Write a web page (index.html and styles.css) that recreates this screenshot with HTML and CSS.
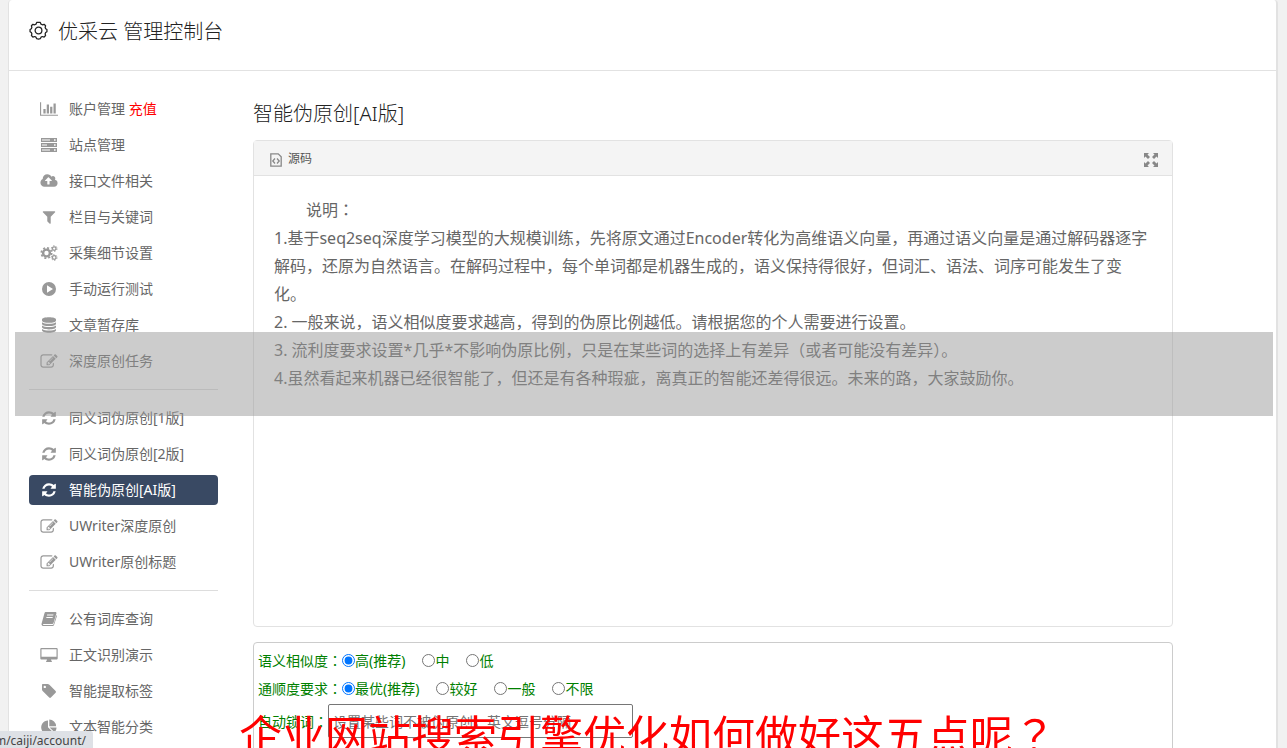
FILE: index.html
```html
<!DOCTYPE html>
<html lang="zh-CN">
<head>
    <meta charset="UTF-8">
    <meta name="viewport" content="width=device-width, initial-scale=1.0">
    <title>优采云 管理控制台</title>
    <link rel="stylesheet" href="styles.css">
</head>
<body>
    <!-- 图标 -->
    <svg class="sprite" aria-hidden="true">
        <symbol id="i-gear" viewBox="0 0 18 18"><path d="M9 1.200l1.700.2.7 1.600 1.200.6 1.700-.5 1.400 1.400-.4 1.700.5 1.100 1.200.8v2l-1.200.8-.5 1.200.4 1.700-1.400 1.400-1.700-.5-1.200.6-.7 1.500-1.700.3-1.700-.3-.7-1.500-1.200-.6-1.700.5-1.400-1.400.4-1.700-.5-1.200L1 10.100v-2l1.200-.8.5-1.100-.4-1.700 1.400-1.400 1.700.5 1.200-.6.7-1.600z" fill="none" stroke="currentColor" stroke-width="1.200" stroke-linejoin="round"/><circle cx="9" cy="9" r="3.200" fill="none" stroke="currentColor" stroke-width="1.200"/></symbol>
        <symbol id="i-chart" viewBox="0 0 2048 1792"><path d="M640 896v512H384V896h256zm384-512v1024H768V384h256zm1024 1152v128H0V128h128v1408h1920zm-640-896v768h-256V640h256zm384-384v1152h-256V256h256z"/></symbol>
        <symbol id="i-server" viewBox="0 0 18 16"><path fill-rule="evenodd" d="M1 1h16v4H1zM1 6h16v4H1zM1 11h16v4H1zM2 2.500v1h8v-1zM2 7.500v1h5v-1zM2 12.500v1h8v-1zM14 2.200v1.600h1.600V2.200zM14 7.200v1.600h1.600V7.200zM14 12.200v1.600h1.600v-1.600z"/></symbol>
        <symbol id="i-cloud" viewBox="0 0 1920 1792"><path fill-rule="evenodd" d="M1280 864q0-14-9-23L919 489q-9-9-23-9t-23 9L522 840q-10 12-10 24 0 14 9 23t23 9h224v352q0 13 9.500 22.500t22.500 9.500h192q13 0 22.500-9.500t9.500-22.500V896h224q13 0 22.500-9.500t9.500-22.500zm640 288q0 159-112.500 271.500T1536 1536H448q-185 0-316.500-131.500T0 1088q0-130 70-240t188-165q-2-30-2-43 0-212 150-362t362-150q156 0 285.500 87T1242 410q71-62 166-62 106 0 181 75t75 181q0 76-41 138 130 31 213.500 135.500T1920 1152z"/></symbol>
        <symbol id="i-filter" viewBox="0 0 1792 1792"><path d="M1595 295q17 41-14 70l-493 493v742q0 42-39 59-13 5-25 5-27 0-45-19l-256-256q-19-19-19-45V858L211 365q-31-29-14-70 17-39 59-39h1280q42 0 59 39z"/></symbol>
        <symbol id="i-cogs" viewBox="0 0 18 16"><g fill="none" stroke="currentColor"><circle cx="6.500" cy="8" r="3.400" stroke-width="2.400"/><circle cx="6.500" cy="8" r="5.200" stroke-width="1.700" stroke-dasharray="2.040 2.040"/><circle cx="14.200" cy="3.600" r="1.800" stroke-width="1.300"/><circle cx="14.200" cy="3.600" r="2.800" stroke-width="1" stroke-dasharray="1.470 1.460"/><circle cx="14.200" cy="12.500" r="1.800" stroke-width="1.300"/><circle cx="14.200" cy="12.500" r="2.800" stroke-width="1" stroke-dasharray="1.470 1.460"/></g></symbol>
        <symbol id="i-play" viewBox="0 0 16 16"><path fill-rule="evenodd" d="M8 1a7 7 0 1 1 0 14A7 7 0 0 1 8 1zM6 4.300v7.400L12 8z"/></symbol>
        <symbol id="i-database" viewBox="0 0 16 16"><path d="M1 2.600C1 1 4 .2 8 .2s7 .8 7 2.400v.8c0 1.500-3 2.400-7 2.400s-7-.9-7-2.400zM1 5.300c1.500 1 4 1.500 7 1.500s5.500-.5 7-1.500v1.400c0 1.500-3 2.400-7 2.400s-7-.9-7-2.400zM1 8.600c1.500 1 4 1.500 7 1.500s5.500-.5 7-1.500V10c0 1.500-3 2.400-7 2.400S1 11.500 1 10zM1 11.900c1.500 1 4 1.500 7 1.500s5.500-.5 7-1.500v1.400c0 1.500-3 2.500-7 2.500s-7-1-7-2.500z"/></symbol>
        <symbol id="i-edit" viewBox="0 0 1792 1664"><path fill-rule="evenodd" d="M888 1184l116-116-152-152-116 116v56h96v96h56zm440-720q-16-16-33 1L945 815q-17 17-1 33t33-1l350-350q17-17 1-33zm80 594v190q0 119-84.500 203.500T1120 1536H288q-119 0-203.500-84.500T0 1248V416q0-119 84.500-203.500T288 128h832q63 0 117 25 15 7 18 23 3 17-9 29l-49 49q-14 14-32 8-23-6-45-6H288q-66 0-113 47t-47 113v832q0 66 47 113t113 47h832q66 0 113-47t47-113v-126q0-13 9-22l64-64q15-15 35-7t20 29zm-96-738l288 288-672 672H640V992l672-672zm444 132l-92 92-288-288 92-92q28-28 68-28t68 28l152 152q28 28 28 68t-28 68z"/></symbol>
        <symbol id="i-refresh" viewBox="-128 -128 1792 1792"><path d="M1511 928q0 5-1 7-64 268-268 434.500T764 1536q-146 0-282.500-55T238 1324l-129 129q-19 19-45 19t-45-19-19-45V960q0-26 19-45t45-19h448q26 0 45 19t19 45-19 45l-137 137q71 66 161 102t187 36q134 0 250-65t186-179q11-17 53-117 8-23 30-23h192q13 0 22.500 9.500t9.500 22.500zm25-800v448q0 26-19 45t-45 19h-448q-26 0-45-19t-19-45 19-45l138-138Q969 256 768 256q-134 0-250 65T332 500q-11 17-53 117-8 23-30 23H50q-13 0-22.500-9.500T18 608v-7q65-268 270-434.500T768 0q146 0 284 55.500T1297 212l130-129q19-19 45-19t45 19 19 45z"/></symbol>
        <symbol id="i-book" viewBox="0 0 16 16"><path fill-rule="evenodd" d="M5 1h9.300c.9 0 1.400.7 1.100 1.600L12.500 12c-.2.700-.8 1-1.500 1H3c-.8 0-1.200.6-.8 1h9.300c.6 0 1-.3 1.200-.9L15.400 4c.5.300.6.800.4 1.400l-2.600 8.200c-.3 1-1 1.500-1.900 1.500H2.600c-1.400 0-2.500-1.300-2-2.700L3.400 2.400C3.700 1.500 4.200 1 5 1zm1.200 2.600-.3 1h6.300l.3-1zm-.7 2.300-.3 1h6.300l.3-1z"/></symbol>
        <symbol id="i-desktop" viewBox="0 0 18 16"><path fill-rule="evenodd" d="M1.500 1h15c.6 0 1.200.5 1.200 1.200v9c0 .7-.6 1.300-1.200 1.300H11l.5 1.500c.5.300.6 1 .2 1H6.300c-.4 0-.3-.7.200-1l.5-1.500H1.500C.8 12.500.3 12 .3 11.200v-9C.3 1.500.8 1 1.500 1zm0 1.200v7.500h15V2.200z"/></symbol>
        <symbol id="i-tag" viewBox="0 0 16 16"><path fill-rule="evenodd" d="M2 1h4.600c.6 0 1.300.3 1.800.8l6.200 6.300c.5.500.5 1.200 0 1.700l-4.700 4.700c-.5.500-1.200.5-1.700 0L1.900 8.300C1.400 7.800 1 7 1 6.400V2c0-.6.400-1 1-1zm1.800 1.700a1.200 1.200 0 1 0 0 2.400 1.200 1.200 0 0 0 0-2.400z"/></symbol>
        <symbol id="i-pie" viewBox="0 0 16 16"><path d="M7 1.500v6.800l4.800 4.800A6.800 6.800 0 1 1 7 1.500zM8.600 8.500h6.900c0 1.900-.8 3.600-2 4.800zM8.300.6a6.800 6.800 0 0 1 6.800 6.700H8.300z"/></symbol>
        <symbol id="i-source" viewBox="0 0 12 14"><path d="M.8.800h7.400l3 3v9.400H.8z" fill="none" stroke="currentColor" stroke-width="1.300"/><path d="M5 5.500 2.800 8 5 10.500M7 5.500 9.200 8 7 10.500" fill="none" stroke="currentColor" stroke-width="1.300"/></symbol>
        <symbol id="i-expand" viewBox="0 0 14 14"><path d="M0 0h5L3.500 1.500 6 4 4 6 1.500 3.500 0 5zM14 0v5l-1.500-1.500L10 6 8 4l2.500-2.500L9 0zM0 14V9l1.500 1.500L4 8l2 2-2.500 2.500L5 14zM14 14H9l1.500-1.500L8 10l2-2 2.500 2.500L14 9z"/></symbol>
    </svg>

    <div class="wrap">
        <header class="header">
            <svg class="icon"><use href="#i-gear"/></svg>
            <h1>优采云 管理控制台</h1>
        </header>

        <div class="container">
            <nav class="sidebar">
                <ul>
                    <li><a href="#"><svg class="icon"><use href="#i-chart"/></svg><span>账户管理 <em>充值</em></span></a></li>
                    <li><a href="#"><svg class="icon"><use href="#i-server"/></svg>站点管理</a></li>
                    <li><a href="#"><svg class="icon"><use href="#i-cloud"/></svg>接口文件相关</a></li>
                    <li><a href="#"><svg class="icon"><use href="#i-filter"/></svg>栏目与关键词</a></li>
                    <li><a href="#"><svg class="icon"><use href="#i-cogs"/></svg>采集细节设置</a></li>
                    <li><a href="#"><svg class="icon"><use href="#i-play"/></svg>手动运行测试</a></li>
                    <li><a href="#"><svg class="icon"><use href="#i-database"/></svg>文章暂存库</a></li>
                    <li><a href="#"><svg class="icon"><use href="#i-edit"/></svg>深度原创任务</a></li>
                </ul>
                <ul>
                    <li><a href="#"><svg class="icon"><use href="#i-refresh"/></svg>同义词伪原创[1版]</a></li>
                    <li><a href="#"><svg class="icon"><use href="#i-refresh"/></svg>同义词伪原创[2版]</a></li>
                    <li><a href="#" class="active"><svg class="icon"><use href="#i-refresh"/></svg>智能伪原创[AI版]</a></li>
                    <li><a href="#"><svg class="icon"><use href="#i-edit"/></svg>UWriter深度原创</a></li>
                    <li><a href="#"><svg class="icon"><use href="#i-edit"/></svg>UWriter原创标题</a></li>
                </ul>
                <ul>
                    <li><a href="#"><svg class="icon"><use href="#i-book"/></svg>公有词库查询</a></li>
                    <li><a href="#"><svg class="icon"><use href="#i-desktop"/></svg>正文识别演示</a></li>
                    <li><a href="#"><svg class="icon"><use href="#i-tag"/></svg>智能提取标签</a></li>
                    <li><a href="#"><svg class="icon"><use href="#i-pie"/></svg>文本智能分类</a></li>
                </ul>
            </nav>

            <main class="content">
                <h2>智能伪原创[AI版]</h2>
                <section class="editor">
                    <div class="toolbar">
                        <button type="button" class="source"><svg><use href="#i-source"/></svg>源码</button>
                        <button type="button" class="expand" aria-label="全屏"><svg><use href="#i-expand"/></svg></button>
                    </div>
                    <div class="editor-body">
                        <p class="indent">说明<span class="mark" lang="zh-TW">：</span></p>
                        <p>1.基于seq2seq深度学习模型的大规模训练，先将原文通过Encoder转化为高维语义向量，再通过语义向量是通过解码器逐字解码，还原为自然语言。在解码过程中，每个单词都是机器生成的，语义保持得很好，但词汇、语法、词序可能发生了变化。</p>
                        <p>2. 一般来说，语义相似度要求越高，得到的伪原比例越低。请根据您的个人需要进行设置。</p>
                        <p>3. 流利度要求设置*几乎*不影响伪原比例，只是在某些词的选择上有差异（或者可能没有差异）。</p>
                        <p>4.虽然看起来机器已经很智能了，但还是有各种瑕疵，离真正的智能还差得很远。未来的路，大家鼓励你。</p>
                    </div>
                </section>

                <form class="options">
                    <div class="row">
                        <span>语义相似度<span class="mark" lang="zh-TW">：</span></span>
                        <label><input type="radio" name="similar" checked>高(推荐)</label>
                        <label><input type="radio" name="similar">中</label>
                        <label><input type="radio" name="similar">低</label>
                    </div>
                    <div class="row">
                        <span>通顺度要求<span class="mark" lang="zh-TW">：</span></span>
                        <label><input type="radio" name="fluent" checked>最优(推荐)</label>
                        <label><input type="radio" name="fluent">较好</label>
                        <label><input type="radio" name="fluent">一般</label>
                        <label><input type="radio" name="fluent">不限</label>
                    </div>
                    <div class="row lock">
                        <label for="lockWords">自动锁词<span class="mark" lang="zh-TW">：</span></label>
                        <input type="text" id="lockWords" placeholder="设置某些词不被伪原创，英文逗号分隔">
                    </div>
                </form>
            </main>
        </div>
    </div>

    <div class="mask"></div>
    <div class="caption">企业网站搜索引擎优化如何做好这五点呢<span class="mark" lang="zh-TW">？</span></div>
    <div class="status">m/caiji/account/</div>
</body>
</html>
```

FILE: styles.css
```css
* {
    margin: 0;
    padding: 0;
    box-sizing: border-box;
}

body {
    height: 100vh;
    overflow: hidden;
    font-family: 'Noto Sans', 'Noto Sans CJK SC', sans-serif;
    font-size: 14px;
    color: #666;
    background-color: #f1f1f1;
}

.sprite {
    display: none;
}

svg {
    fill: currentColor;
}

/* 标点居中 */
.mark {
    font-family: 'Noto Sans CJK TC', sans-serif;
    line-height: 1;
}

.wrap {
    margin: 0 9px 0 8px;
    min-height: 100vh;
    background-color: #fff;
    border: solid #e2e2e2;
    border-width: 0 2px 0 1px;
    border-radius: 4px 4px 0 0;
}

.header {
    display: flex;
    align-items: center;
    gap: 10px;
    height: 71px;
    padding: 0 20px 10px;
    border-bottom: 1px solid #e2e2e2;
    color: #222;
}

.header .icon {
    width: 19px;
    height: 19px;
}

.header h1 {
    font-size: 20px;
    font-weight: 300;
}

.container {
    display: flex;
    gap: 35px;
    padding: 23px 20px;
}

/* 左侧菜单 */
.sidebar {
    flex: 0 0 189px;
}

.sidebar ul {
    display: grid;
    gap: 6px;
    list-style: none;
}

.sidebar ul + ul {
    margin-top: 13px;
    padding-top: 13px;
    border-top: 1px solid #ddd;
}

.sidebar a {
    display: flex;
    align-items: center;
    gap: 11px;
    height: 30px;
    padding: 0 11px 2px;
    border-radius: 4px;
    color: #666;
    text-decoration: none;
}

.sidebar .icon {
    width: 18px;
    height: 16px;
    margin-top: 2px;
    color: #999;
}

.sidebar em {
    font-style: normal;
    color: red;
}

.sidebar a.active,
.sidebar a.active .icon {
    background-color: #394963;
    color: #fff;
}

/* 内容 */
.content {
    flex: 0 0 75%;
}

.content h2 {
    margin: 5px 0 12px;
    font-size: 20px;
    font-weight: 300;
    line-height: 29px;
    color: #222;
}

.editor {
    border: 1px solid #e2e2e2;
    border-radius: 4px;
}

.toolbar {
    display: flex;
    justify-content: space-between;
    align-items: center;
    height: 35px;
    padding: 0 14px 0 16px;
    border-bottom: 1px solid #e2e2e2;
    background-color: #f4f4f4;
}

.toolbar button {
    display: flex;
    align-items: center;
    gap: 6px;
    border: none;
    background: none;
    font-family: inherit;
    font-size: 12px;
    color: #555;
}

.toolbar svg {
    width: 12px;
    height: 14px;
    margin-top: 3px;
    color: #888;
}

.toolbar .expand svg {
    width: 14px;
}

.editor-body {
    min-height: 450px;
    padding: 20px;
    font-size: 16px;
    line-height: 28px;
}

.indent {
    text-indent: 2em;
}

.options {
    margin-top: 15px;
    padding: 3px 4px 40px;
    border: 1px solid #ccc;
    border-radius: 4px;
    color: green;
}

.row {
    display: flex;
    align-items: center;
    height: 28px;
}

.row label {
    display: flex;
    align-items: center;
}

.row label + label {
    margin-left: 17px;
}

.row input[type="radio"] {
    width: 13px;
    height: 13px;
}

.row.lock {
    height: 34px;
    margin-top: 2px;
}

.row input[type="text"] {
    width: 305px;
    height: 34px;
    padding: 0 4px;
    border: 1px solid #767676;
    border-radius: 2px;
    font-family: inherit;
    font-size: 14px;
}

/* 浮层 */
.mask {
    position: fixed;
    top: 332px;
    left: 15px;
    right: 14px;
    height: 84px;
    background-color: rgba(153, 153, 153, 0.5);
}

.caption {
    position: fixed;
    left: 8px;
    right: 0;
    bottom: -18px;
    font-size: 43px;
    line-height: 60px;
    text-align: center;
    white-space: nowrap;
    color: red;
}

.status {
    position: fixed;
    left: 0;
    bottom: 0;
    display: flex;
    justify-content: flex-end;
    width: 93px;
    padding: 2px 7px 0 0;
    overflow: hidden;
    border-radius: 0 3px 0 0;
    background-color: #dee1e6;
    font-size: 12px;
    line-height: 15px;
    color: #444;
}
```
